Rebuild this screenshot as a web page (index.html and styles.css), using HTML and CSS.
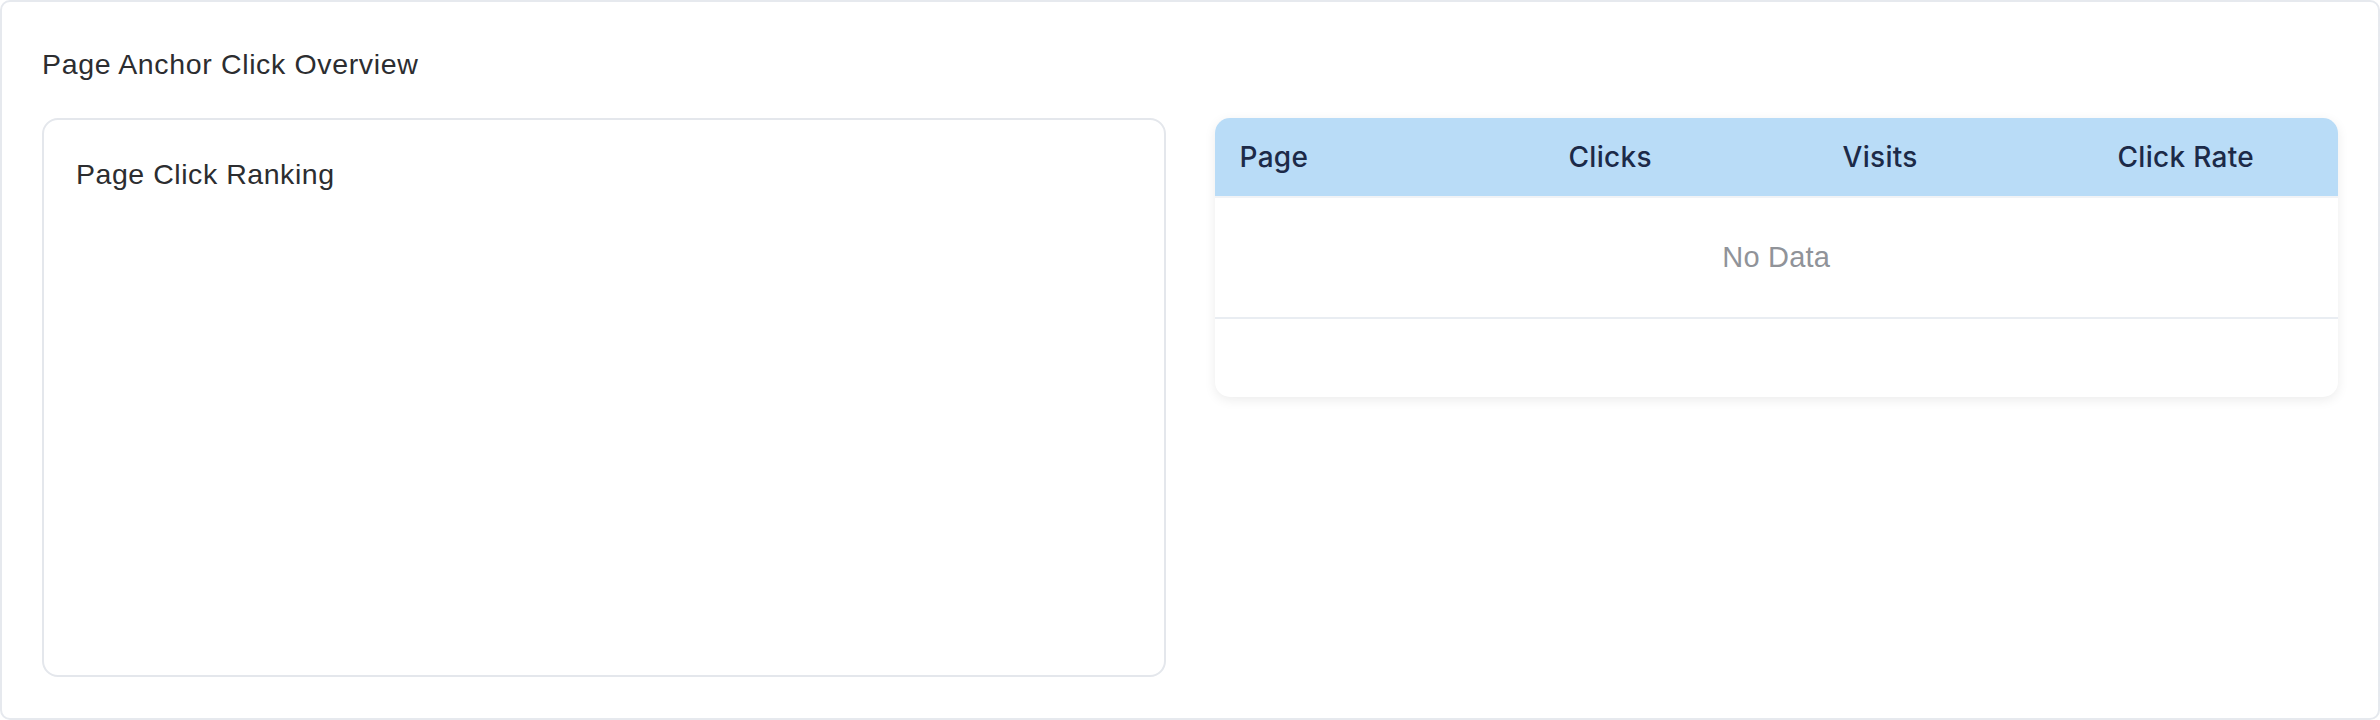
FILE: index.html
```html
<!DOCTYPE html>
<html lang="en">
<head>
<meta charset="utf-8">
<title>Page Anchor Click Overview</title>
<link rel="stylesheet" href="styles.css">
</head>
<body>
<section class="overview">
  <h2 class="overview-title">Page Anchor Click Overview</h2>
  <div class="overview-grid">
    <div class="rank-card">
      <h3 class="rank-title">Page Click Ranking</h3>
    </div>
    <div class="table-card">
      <div class="table-head">
        <div class="th">Page</div>
        <div class="th">Clicks</div>
        <div class="th">Visits</div>
        <div class="th">Click Rate</div>
      </div>
      <div class="table-empty">No Data</div>
      <div class="table-foot"></div>
    </div>
  </div>
</section>
</body>
</html>
```
FILE: styles.css
```css
html, body {
  margin: 0;
  padding: 0;
  background: #ffffff;
}
body {
  font-family: "Liberation Sans", Arial, sans-serif;
}
.overview {
  box-sizing: border-box;
  width: 2380px;
  height: 720px;
  border: 2px solid #e6e9ee;
  border-radius: 10px;
  padding: 42px 40px 41px 40px;
  display: flex;
  flex-direction: column;
  background: #ffffff;
}
.overview-title {
  margin: 0;
  font-size: 28.5px;
  line-height: 40px;
  font-weight: 400;
  letter-spacing: 0.65px;
  color: #2c2d30;
}
.overview-grid {
  margin-top: 34px;
  flex: 1;
  display: grid;
  grid-template-columns: 1fr 1fr;
  column-gap: 49px;
}
.rank-card {
  box-sizing: border-box;
  border: 2px solid #e4e7ec;
  border-radius: 16px;
  padding: 34px 32px;
}
.rank-title {
  margin: 0;
  font-size: 28.5px;
  line-height: 40px;
  font-weight: 400;
  letter-spacing: 0.55px;
  color: #2c2d30;
}
.table-card {
  align-self: start;
  border-radius: 15px;
  background: #ffffff;
  box-shadow: 0 3px 12px rgba(0, 0, 0, 0.08);
  overflow: hidden;
}
.table-head {
  display: grid;
  grid-template-columns: 329px 274px 275px 1fr;
  height: 78px;
  align-items: center;
  background: #b9dcf7;
  border-bottom: 2px solid #f1f3f6;
}
.th {
  padding: 0 25px;
  font-family: Inter, "Liberation Sans", sans-serif;
  font-size: 28px;
  font-weight: 500;
  letter-spacing: 0.3px;
  color: #1c2a48;
}
.table-empty {
  height: 119px;
  display: flex;
  align-items: center;
  justify-content: center;
  border-bottom: 2px solid #e9edf2;
  font-size: 29px;
  letter-spacing: 0.2px;
  color: #909399;
}
.table-foot {
  height: 78px;
}
```
